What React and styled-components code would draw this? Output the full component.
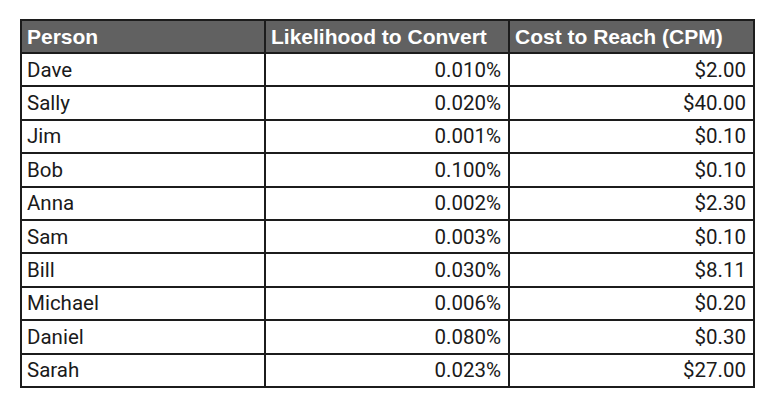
import React from "react";
import styled, { createGlobalStyle } from "styled-components";

const Global = createGlobalStyle`
  html, body { margin: 0; padding: 0; background: #fff; }
`;

const Page = styled.div`
  padding: 19px 0 0 20px;
`;

const Table = styled.table`
  border-collapse: collapse;
  table-layout: fixed;
  width: 733px;
  border: 2px solid #1c1c1c;
`;

const HeadCell = styled.th`
  background: #616161;
  color: #fff;
  font-family: "Liberation Sans", Arial, sans-serif;
  font-weight: bold;
  font-size: 21px;
  text-align: left;
  height: 31px;
  padding: 0 5px;
  border: 2px solid #1c1c1c;
  white-space: nowrap;
  overflow: hidden;
`;

const Cell = styled.td`
  font-family: Roboto, "Liberation Sans", sans-serif;
  font-size: 20.5px;
  color: #1a1a1a;
  text-align: ${(p) => (p.$num ? "right" : "left")};
  height: 31.4px;
  padding: 0 ${(p) => (p.$num ? "7px" : "5px")} 0 5px;
  border: 2px solid #1c1c1c;
  white-space: nowrap;
`;

const rows = [
  ["Dave", "0.010%", "$2.00"],
  ["Sally", "0.020%", "$40.00"],
  ["Jim", "0.001%", "$0.10"],
  ["Bob", "0.100%", "$0.10"],
  ["Anna", "0.002%", "$2.30"],
  ["Sam", "0.003%", "$0.10"],
  ["Bill", "0.030%", "$8.11"],
  ["Michael", "0.006%", "$0.20"],
  ["Daniel", "0.080%", "$0.30"],
  ["Sarah", "0.023%", "$27.00"],
];

export default function App() {
  return (
    <Page>
      <Global />
      <Table>
        <colgroup>
          <col style={{ width: 244 }} />
          <col style={{ width: 244 }} />
          <col style={{ width: 245 }} />
        </colgroup>
        <thead>
          <tr>
            <HeadCell>Person</HeadCell>
            <HeadCell>Likelihood to Convert</HeadCell>
            <HeadCell>Cost to Reach (CPM)</HeadCell>
          </tr>
        </thead>
        <tbody>
          {rows.map(([name, like, cost]) => (
            <tr key={name}>
              <Cell>{name}</Cell>
              <Cell $num>{like}</Cell>
              <Cell $num>{cost}</Cell>
            </tr>
          ))}
        </tbody>
      </Table>
    </Page>
  );
}
